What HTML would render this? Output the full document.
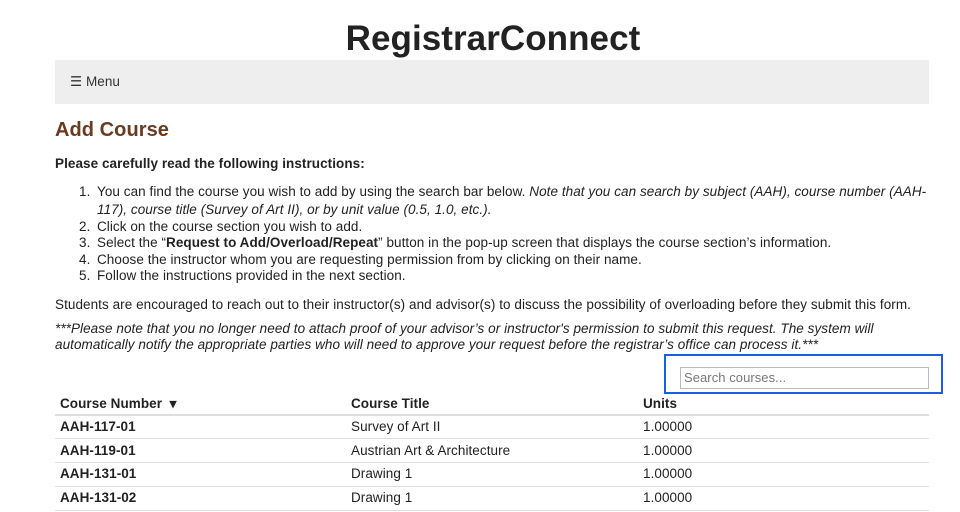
<!DOCTYPE html>
<html><head><meta charset="utf-8"><style>
body{margin:0;width:960px;height:512px;overflow:hidden;background:#fff;font-family:"Liberation Sans",sans-serif;color:#222;font-size:13.5px;position:relative;letter-spacing:0.06px}
.a{position:absolute;white-space:nowrap}
h1{position:absolute;left:0;width:986px;text-align:center;top:19px;margin:0;font-size:35px;font-weight:bold;color:#222}
.menu{position:absolute;left:55px;top:60px;width:874px;height:44px;background:#eee}
.brown{color:#6b3a1f}
.it{font-style:italic}
.line{position:absolute;left:55px;width:874px;height:1px;background:#ddd}
</style></head><body>
<h1>RegistrarConnect</h1>
<div class="menu"><span class="a" style="left:15px;top:14px;font-size:13.5px;color:#333">&#9776; Menu</span></div>
<div class="a brown" style="left:55px;top:119px;font-size:20px;font-weight:bold">Add Course</div>
<div class="a" style="left:55px;top:156px;font-weight:bold">Please carefully read the following instructions:</div>
<div class="a" style="left:79px;top:184px">1.</div>
<div class="a" style="left:97px;top:184px">You can find the course you wish to add by using the search bar below. <i>Note that you can search by subject (AAH), course number (AAH-</i></div>
<div class="a it" style="left:97px;top:202px">117), course title (Survey of Art II), or by unit value (0.5, 1.0, etc.).</div>
<div class="a" style="left:79px;top:219px">2.</div><div class="a" style="left:97px;top:219px">Click on the course section you wish to add.</div>
<div class="a" style="left:79px;top:235px">3.</div><div class="a" style="left:97px;top:235px">Select the “<b>Request to Add/Overload/Repeat</b>” button in the pop-up screen that displays the course section’s information.</div>
<div class="a" style="left:79px;top:252px">4.</div><div class="a" style="left:97px;top:252px">Choose the instructor whom you are requesting permission from by clicking on their name.</div>
<div class="a" style="left:79px;top:268px">5.</div><div class="a" style="left:97px;top:268px">Follow the instructions provided in the next section.</div>
<div class="a" style="left:55px;top:297px">Students are encouraged to reach out to their instructor(s) and advisor(s) to discuss the possibility of overloading before they submit this form.</div>
<div class="a it" style="left:55px;top:321px">***Please note that you no longer need to attach proof of your advisor’s or instructor's permission to submit this request. The system will</div>
<div class="a it" style="left:55px;top:337px">automatically notify the appropriate parties who will need to approve your request before the registrar’s office can process it.***</div>
<div class="a" style="left:664px;top:354px;width:275px;height:36px;border:2px solid #1a5fe0"></div>
<div class="a" style="left:680px;top:367px;width:244px;height:20px;border:1px solid #bbb;color:#777;font-size:13px;line-height:20px;padding-left:3px">Search courses...</div>
<div class="a" style="left:60px;top:396px;font-weight:bold">Course Number &nbsp;▾</div>
<div class="a" style="left:351px;top:396px;font-weight:bold">Course Title</div>
<div class="a" style="left:643px;top:396px;font-weight:bold">Units</div>
<div class="line" style="top:414px;height:2px"></div>
<div class="a" style="left:60px;top:419px;font-weight:bold">AAH-117-01</div><div class="a" style="left:351px;top:419px">Survey of Art II</div><div class="a" style="left:643px;top:419px">1.00000</div>
<div class="line" style="top:438px"></div>
<div class="a" style="left:60px;top:443px;font-weight:bold">AAH-119-01</div><div class="a" style="left:351px;top:443px">Austrian Art &amp; Architecture</div><div class="a" style="left:643px;top:443px">1.00000</div>
<div class="line" style="top:462px"></div>
<div class="a" style="left:60px;top:466px;font-weight:bold">AAH-131-01</div><div class="a" style="left:351px;top:466px">Drawing 1</div><div class="a" style="left:643px;top:466px">1.00000</div>
<div class="line" style="top:486px"></div>
<div class="a" style="left:60px;top:490px;font-weight:bold">AAH-131-02</div><div class="a" style="left:351px;top:490px">Drawing 1</div><div class="a" style="left:643px;top:490px">1.00000</div>
<div class="line" style="top:510px"></div>
</body></html>
